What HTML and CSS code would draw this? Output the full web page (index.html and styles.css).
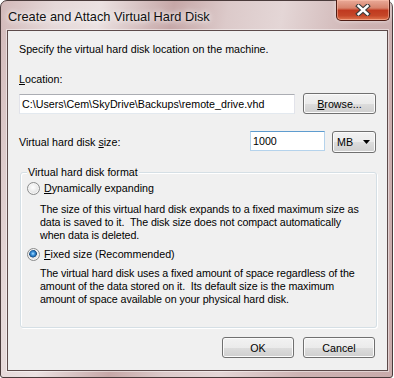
FILE: index.html
```html
<!DOCTYPE html>
<html lang="en">
<head>
  <meta charset="UTF-8" />
  <title>Create and Attach Virtual Hard Disk</title>
  <link rel="stylesheet" href="styles.css">
</head>
<body>

<div class="window">
  <div class="titlebar">
    <span class="title">Create and Attach Virtual Hard Disk</span>
    <button class="close-btn" title="Close">
      <svg width="16" height="12" viewBox="0 0 16 12">
        <path d="M3.5 2 L12.5 10 M12.5 2 L3.5 10" stroke="#3b3b3b" stroke-width="4.6" stroke-linecap="square" fill="none"/>
        <path d="M3.5 2 L12.5 10 M12.5 2 L3.5 10" stroke="#fff" stroke-width="2.4" stroke-linecap="square" fill="none"/>
      </svg>
    </button>
  </div>

  <div class="client">
    <p class="intro">Specify the virtual hard disk location on the machine.</p>

    <div class="field-label"><u>L</u>ocation:</div>
    <div class="location-row">
      <div class="textbox path">C:\Users\Cem\SkyDrive\Backups\remote_drive.vhd</div>
      <button class="btn browse"><u>B</u>rowse...</button>
    </div>

    <div class="size-row">
      <span class="size-label">Virtual hard disk <u>s</u>ize:</span>
      <div class="textbox size focused">1000</div>
      <div class="btn combo">
        <span>MB</span>
        <svg width="7" height="4" viewBox="0 0 7 4"><path d="M0 0H7L3.5 4Z" fill="#000"/></svg>
      </div>
    </div>

    <div class="group">
      <span class="group-label">Virtual hard disk format</span>

      <div class="option"><span class="radio"></span><span><u>D</u>ynamically expanding</span></div>
      <p class="desc first">The size of this virtual hard disk expands to a fixed maximum size as<br>data is saved to it.&nbsp; The disk size does not compact automatically<br>when data is deleted.</p>

      <div class="option second"><span class="radio checked"></span><span><u>F</u>ixed size (Recommended)</span></div>
      <p class="desc">The virtual hard disk uses a fixed amount of space regardless of the<br>amount of the data stored on it.&nbsp; Its default size is the maximum<br>amount of space available on your physical hard disk.</p>
    </div>

    <div class="actions">
      <button class="btn">OK</button>
      <button class="btn">Cancel</button>
    </div>
  </div>
</div>

</body>
</html>
```

FILE: styles.css
```css
body {
  margin: 0;
  background: #fff;
  font-family: "Liberation Sans", Arial, sans-serif;
  font-size: 10.7px;
  color: #000;
}

.window {
  width: 393px;
  height: 378px;
  box-sizing: border-box;
  border: 1px solid #4a3b3b;
  border-radius: 7px 7px 3px 3px;
  display: flex;
  flex-direction: column;
  background: linear-gradient(100deg, #d2b9b9 0%, #e5d8d8 12%, #ebe1e1 22%, #c6a7a7 38%, #dccaca 50%, #e4d6d6 62%, #cdb2b2 80%, #c9abab 100%);
}

.titlebar {
  height: 29px;
  display: flex;
  justify-content: space-between;
  align-items: flex-start;
}

.title {
  margin: 8px 0 0 7px;
  font-size: 12.8px;
  line-height: 15px;
  color: #111;
  text-shadow: 0 0 5px #fff, 0 0 8px #fff;
}

.close-btn {
  width: 54px;
  height: 21px;
  margin: -1px 2px 0 0;
  padding: 0;
  border: 1px solid #4e1d15;
  border-top: none;
  border-radius: 0 0 5px 5px;
  background: linear-gradient(#e9aa98 0%, #d7836c 40%, #c0391f 52%, #c54628 78%, #e0764f 100%);
  box-shadow: inset 0 0 0 1px rgba(255, 200, 180, 0.5), 0 0 4px rgba(255, 255, 255, 0.6);
  display: flex;
  align-items: center;
  justify-content: center;
}

.client {
  flex: 1;
  margin: 0 4px 6px 6px;
  padding: 12px 11px;
  border: 1px solid #5c4a4a;
  background: #f0f0f0;
  box-shadow: 0 0 0 1px rgba(255, 255, 255, 0.45);
  display: flex;
  flex-direction: column;
  line-height: 13px;
}

.intro {
  margin: 0;
}

.field-label {
  margin-top: 17px;
}

.location-row {
  margin-top: 7px;
  display: flex;
  align-items: flex-start;
  gap: 8px;
}

.textbox {
  height: 20px;
  box-sizing: border-box;
  padding: 0 2px;
  line-height: 18px;
  background: #fff;
  border: 1px solid #e2e3ea;
  border-top-color: #abadb3;
  border-bottom-color: #e3e9ef;
  white-space: nowrap;
}

.textbox.path {
  flex: 1;
  margin-top: 1px;
}

.textbox.focused {
  border-color: #b5d3ec;
  border-top-color: #5e9ccf;
}

.btn {
  height: 21px;
  width: 72px;
  box-sizing: border-box;
  padding: 0;
  border: 1px solid #707070;
  border-radius: 3px;
  background: linear-gradient(#f2f2f2 0%, #ebebeb 50%, #dddddd 51%, #cfcfcf 100%);
  box-shadow: inset 0 0 0 1px #fbfbfb;
  font-family: inherit;
  font-size: inherit;
  color: #000;
}

.btn.browse {
  width: 73px;
}

.size-row {
  margin-top: 17px;
  display: flex;
  align-items: flex-start;
}

.size-label {
  margin-top: 5px;
}

.textbox.size {
  width: 75px;
  margin-left: auto;
}

.btn.combo {
  width: 44px;
  height: 22px;
  margin-left: 7px;
  display: flex;
  align-items: center;
  justify-content: space-between;
  padding: 0 5px 0 4px;
}

.group {
  margin: 19px -1px 0 1px;
  padding: 0 6px 21px;
  border: 1px solid #d5dfe5;
  border-radius: 3px;
  box-shadow: inset 1px 1px 0 #fff, 1px 1px 0 #fff;
  display: flex;
  flex-direction: column;
}

.group-label {
  align-self: flex-start;
  margin-top: -7px;
  padding: 0 1px;
  background: #f0f0f0;
}

.option {
  margin-top: 3px;
  display: flex;
  align-items: center;
  gap: 4px;
  height: 13px;
}

.option.second {
  margin-top: 6px;
}

.radio {
  width: 13px;
  height: 13px;
  box-sizing: border-box;
  border-radius: 50%;
  border: 1px solid #8b8c8c;
  background: radial-gradient(circle at 45% 40%, #ffffff 0, #ececec 45%, #d2d2d2 100%);
  box-shadow: inset 0 0 0 1px #f6f6f6;
}

.radio.checked {
  background:
    radial-gradient(circle at 45% 42%, #b9e4ff 0, #4aa0e6 1.4px, #1d66ab 3px, #1b4a7a 3.6px, rgba(255,255,255,0) 4.2px),
    radial-gradient(circle at 45% 40%, #ffffff 0, #ececec 45%, #d2d2d2 100%);
}

.desc {
  margin: 6px 0 0 13px;
  white-space: nowrap;
  letter-spacing: -0.09px;
}

.desc.first {
  margin-top: 8px;
}

.actions {
  margin-top: 9px;
  padding-right: 1px;
  display: flex;
  justify-content: flex-end;
  gap: 9px;
}
```
